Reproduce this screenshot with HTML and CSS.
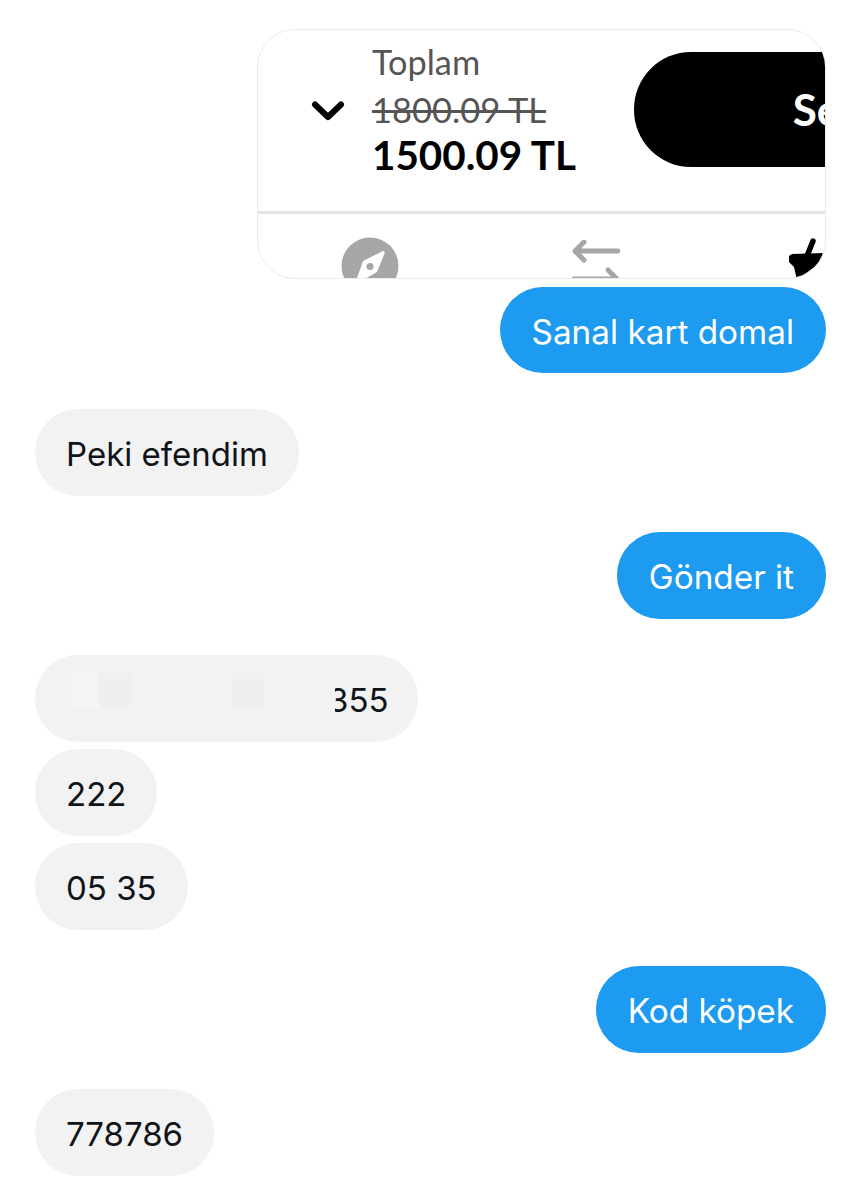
FILE: index.html
```html
<!DOCTYPE html>
<html lang="en">
<head>
    <meta charset="UTF-8">
    <title>Mesajlar</title>
    <link rel="stylesheet" href="styles.css">
</head>
<body>
<div class="chat">
    <div class="card">
        <div class="card-top">
            <svg class="chevron" width="34" height="20" viewBox="0 0 34 20">
                <path d="M4 3.500 L17 16 L30 3.500" fill="none" stroke="#000" stroke-width="6" stroke-linecap="round" stroke-linejoin="round"/>
            </svg>
            <div class="total">
                <div class="total-label">Toplam</div>
                <div class="total-old">1800.09 TL</div>
                <div class="total-new">1500.09 TL</div>
            </div>
            <div class="buy-btn">Sepete</div>
        </div>
        <div class="card-nav">
            <svg class="nav-compass" width="58" height="58" viewBox="0 0 58 58">
                <circle cx="29" cy="29" r="28.5" fill="#a6a6a6"/>
                <path d="M41 14.500 C43 13.500 44 14.500 43.500 16.500 L36 35 L17 46 C15 47 14 46 15 44 L22 24 Z" fill="#fff"/>
                <circle cx="29" cy="29.500" r="3.500" fill="#a6a6a6"/>
            </svg>
            <svg class="nav-arrows" width="48" height="42" viewBox="0 0 48 42">
                <path d="M46 11 H3 M12 2 L3 11 L12 20" fill="none" stroke="#a6a6a6" stroke-width="5" stroke-linecap="round" stroke-linejoin="round"/>
                <path d="M2 39 H45 M36 30 L45 39 L36 48" fill="none" stroke="#a6a6a6" stroke-width="5" stroke-linecap="round" stroke-linejoin="round"/>
            </svg>
            <svg class="nav-brush" width="38" height="42" viewBox="0 0 38 42">
                <path d="M24 3 L18 18" fill="none" stroke="#000" stroke-width="5.500" stroke-linecap="round"/>
                <path d="M3 16 L34 15 Q31 27 24 30 L8 42 L5 29 L0 24 L0 18 Z" fill="#000"/>
                <path d="M37 0 V4" fill="none" stroke="#000" stroke-width="1.500"/>
            </svg>
        </div>
    </div>

    <div class="group sent">
        <div class="bubble">Sanal kart domal</div>
    </div>
    <div class="group">
        <div class="bubble">Peki efendim</div>
    </div>
    <div class="group sent">
        <div class="bubble">Gönder it</div>
    </div>
    <div class="group">
        <div class="bubble bubble-hidden">
            <div class="redact">
                <span class="patch patch-light"></span>
                <span class="patch patch-dark"></span>
                <span class="patch patch-mid"></span>
                <span class="patch patch-dark"></span>
                <span class="patch patch-end"></span>
            </div>
            <span class="digits">355</span>
        </div>
        <div class="bubble">222</div>
        <div class="bubble">05 35</div>
    </div>
    <div class="group sent">
        <div class="bubble">Kod köpek</div>
    </div>
    <div class="group">
        <div class="bubble">778786</div>
    </div>
</div>
</body>
</html>
```
FILE: styles.css
```css
*{
    margin: 0;
    padding: 0;
    box-sizing: border-box;
}
body{
    background: #fff;
    font-family: "Inter", "Liberation Sans", sans-serif;
}
.chat{
    display: flex;
    flex-direction: column;
    align-items: flex-start;
    padding: 29px 35px 0 35px;
}

/* quoted screenshot */
.card{
    align-self: flex-end;
    width: 569px;
    height: 250px;
    border: 1px solid #ececec;
    border-radius: 38px;
    overflow: hidden;
    background: #fff;
    font-family: "Lato", sans-serif;
}
.card-top{
    display: flex;
    align-items: flex-start;
    width: 760px;
    height: 184px;
    border-bottom: 3px solid #e6e6e6;
}
.chevron{
    margin: 71px 0 0 53px;
    flex-shrink: 0;
}
.total{
    width: 280px;
    margin: 10px 0 0 27px;
}
.total-label{
    font-size: 34.3px;
    line-height: 44px;
    color: #555;
}
.total-old{
    font-size: 34.5px;
    line-height: 52px;
    color: #555;
    text-decoration: line-through;
}
.total-new{
    font-size: 40.4px;
    line-height: 38px;
    font-weight: 700;
    color: #000;
}
.buy-btn{
    width: 400px;
    height: 115px;
    margin-top: 22px;
    padding-left: 159px;
    border-radius: 57px;
    background: #000;
    color: #fff;
    font-size: 44px;
    font-weight: 700;
    line-height: 115px;
}
.card-nav{
    display: flex;
    align-items: flex-start;
    height: 64px;
}
.nav-compass{
    margin: 23px 0 0 83px;
    flex-shrink: 0;
}
.nav-arrows{
    margin: 26px 0 0 173px;
    flex-shrink: 0;
}
.nav-brush{
    margin: 24px 0 0 169px;
    flex-shrink: 0;
}

/* messages */
.group{
    display: flex;
    flex-direction: column;
    align-items: flex-start;
    gap: 7.5px;
    margin-top: 36.5px;
    width: 100%;
}
.card + .group{
    margin-top: 8px;
}
.card + .group .bubble{
    height: 86px;
}
.card + .group + .group{
    margin-top: 36px;
}
.group.sent{
    align-items: flex-end;
}
.bubble{
    height: 86.5px;
    padding: 0 31px;
    border-radius: 43px;
    background: #f2f2f2;
    color: #0f1419;
    font-size: 33px;
    line-height: 90px;
    white-space: nowrap;
}
.sent .bubble{
    padding: 0 32px;
    background: #1d9bf0;
    color: #fff;
    font-size: 33.3px;
}
.bubble-hidden{
    display: flex;
    align-items: flex-start;
    padding-right: 29px;
}
/* covers the start of the number, taller than its patches */
.redact{
    display: flex;
    align-items: flex-start;
    position: relative;
    z-index: 1;
    flex-shrink: 0;
    width: 269px;
    height: 50px;
    margin-top: 18px;
    background: #f2f2f2;
}
.patch{
    width: 33px;
    height: 34px;
}
.patch-light{
    background: #f4f4f4;
}
.patch-dark{
    background: #efefef;
}
.patch-mid{
    width: 99px;
    background: #f3f3f3;
}
.patch-end{
    width: 66px;
    background: #f3f3f3;
}
.digits{
    margin-left: -7px;
}
```
